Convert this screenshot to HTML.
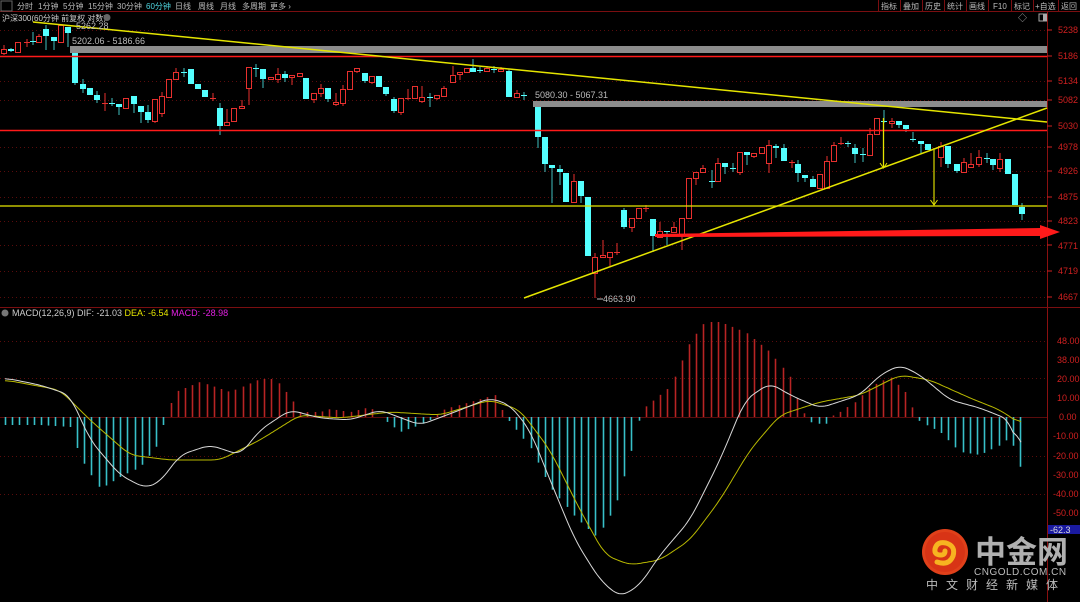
<!DOCTYPE html>
<html><head><meta charset="utf-8">
<style>
html,body{margin:0;padding:0;background:#000;width:1080px;height:602px;overflow:hidden;font-family:"Liberation Sans","Noto Sans CJK SC",sans-serif}
svg{position:absolute;left:0;top:0}
text{font-family:"Liberation Sans","Noto Sans CJK SC",sans-serif}
</style></head><body>
<svg id="s" width="1080" height="602" xmlns="http://www.w3.org/2000/svg">
<rect width="1080" height="602" fill="#000"/>
<line x1="0" y1="11.5" x2="1080" y2="11.5" stroke="#7a0e10"/>
<rect x="1" y="1" width="11" height="10" fill="none" stroke="#666"/>
<g font-size="8" fill="#bbb">
<text x="17" y="9">分时</text><text x="38" y="9">1分钟</text><text x="63" y="9">5分钟</text><text x="88" y="9">15分钟</text><text x="117" y="9">30分钟</text>
<text x="146" y="9" fill="#4fd6e0">60分钟</text><text x="175" y="9">日线</text><text x="198" y="9">周线</text><text x="220" y="9">月线</text><text x="242" y="9">多周期</text><text x="270" y="9">更多 ›</text>
<text x="881" y="9">指标</text><text x="903" y="9">叠加</text><text x="925" y="9">历史</text><text x="947" y="9">统计</text><text x="969" y="9">画线</text><text x="993" y="9">F10</text><text x="1014" y="9">标记</text><text x="1035" y="9">+自选</text><text x="1061" y="9">返回</text>
</g>
<g stroke="#7a0e10"><line x1="878.5" y1="0" x2="878.5" y2="11"/><line x1="900.5" y1="0" x2="900.5" y2="11"/><line x1="922.5" y1="0" x2="922.5" y2="11"/><line x1="944.5" y1="0" x2="944.5" y2="11"/><line x1="966.5" y1="0" x2="966.5" y2="11"/><line x1="988.5" y1="0" x2="988.5" y2="11"/><line x1="1011.5" y1="0" x2="1011.5" y2="11"/><line x1="1033.5" y1="0" x2="1033.5" y2="11"/><line x1="1058.5" y1="0" x2="1058.5" y2="11"/></g>
<text x="2" y="21" font-size="8" fill="#ccc">沪深300(60分钟 前复权 对数)</text>
<circle cx="107" cy="17.5" r="3.5" fill="#666"/>
<text x="1018" y="21" font-size="9" fill="#aaa">◇</text>
<rect x="1039" y="14" width="8" height="7" fill="none" stroke="#aaa"/><rect x="1043" y="14" width="4" height="7" fill="#aaa"/>
<line x1="1047.5" y1="12" x2="1047.5" y2="602" stroke="#8a1010"/>
<line x1="0" y1="307.5" x2="1080" y2="307.5" stroke="#7a0e10"/>
<g id="grid"></g>
<g id="hist"></g>
<g id="cand"></g>
<rect x="70" y="46" width="977" height="7" fill="#8c8c8c"/>
<rect x="533" y="101" width="514" height="6" fill="#8c8c8c"/>
<line x1="0" y1="56.5" x2="1047" y2="56.5" stroke="#ff1a1a" stroke-width="1.5"/>
<line x1="0" y1="130.5" x2="1047" y2="130.5" stroke="#ff1a1a" stroke-width="1.5"/>
<line x1="0" y1="206" x2="1047" y2="206" stroke="#e5e500" stroke-width="1.3"/>
<line x1="33" y1="22" x2="1047" y2="122" stroke="#e5e500" stroke-width="1.5"/>
<line x1="524" y1="298" x2="1047" y2="108" stroke="#e5e500" stroke-width="1.5"/>
<line x1="883.5" y1="118" x2="883.5" y2="167" stroke="#e5e500" stroke-width="1.3"/>
<path d="M880 163 L883.5 168 L887 163" fill="none" stroke="#e5e500"/>
<line x1="934" y1="148" x2="934" y2="205" stroke="#c8c800" stroke-width="1.3"/>
<path d="M930.5 200 L934 205 L937.5 200" fill="none" stroke="#e5e500"/>
<polygon points="655,234 1040,228 1040,225 1060,232 1040,239 1040,236 655,237" fill="#ff1a1a"/>
<g font-size="9" fill="#bbb">
<text x="76" y="29">5262.28</text>
<text x="72" y="44">5202.06 - 5186.66</text>
<text x="535" y="98">5080.30 - 5067.31</text>
<text x="603" y="302">4663.90</text>
</g>
<line x1="597" y1="299" x2="603" y2="299" stroke="#bbb"/>
<g font-size="9" fill="#d02020">
<text x="1058" y="33">5238</text><text x="1058" y="59">5186</text><text x="1058" y="84">5134</text><text x="1058" y="103">5082</text><text x="1058" y="129">5030</text><text x="1058" y="150">4978</text><text x="1058" y="174">4926</text><text x="1058" y="200">4875</text><text x="1058" y="224">4823</text><text x="1058" y="249">4771</text><text x="1058" y="274">4719</text><text x="1058" y="300">4667</text>
<text x="1057" y="344">48.00</text><text x="1057" y="363">38.00</text><text x="1057" y="382">20.00</text><text x="1057" y="401">10.00</text><text x="1059" y="420">0.00</text><text x="1053" y="439">-10.00</text><text x="1053" y="459">-20.00</text><text x="1053" y="478">-30.00</text><text x="1053" y="497">-40.00</text><text x="1053" y="516">-50.00</text>
</g>
<g stroke="#d02020"><line x1="1047" y1="30" x2="1052" y2="30"/><line x1="1047" y1="56" x2="1052" y2="56"/><line x1="1047" y1="81" x2="1052" y2="81"/><line x1="1047" y1="100" x2="1052" y2="100"/><line x1="1047" y1="126" x2="1052" y2="126"/><line x1="1047" y1="147" x2="1052" y2="147"/><line x1="1047" y1="171" x2="1052" y2="171"/><line x1="1047" y1="197" x2="1052" y2="197"/><line x1="1047" y1="221" x2="1052" y2="221"/><line x1="1047" y1="245" x2="1052" y2="245"/><line x1="1047" y1="271" x2="1052" y2="271"/><line x1="1047" y1="297" x2="1052" y2="297"/></g>
<rect x="1048" y="525" width="32" height="9" fill="#1a1aa0"/>
<text x="1050" y="533" font-size="9" fill="#ddd">-62.3</text>
<circle cx="5" cy="313" r="3.5" fill="#777"/>
<text x="12" y="316" font-size="9" fill="#ccc">MACD(12,26,9) DIF: -21.03 <tspan fill="#e5e500">DEA: -6.54</tspan> <tspan fill="#e020e0">MACD: -28.98</tspan></text>
<polyline id="dea" fill="none" stroke="#b8b800" stroke-width="1"/>
<polyline id="dif" fill="none" stroke="#d8d8d8" stroke-width="1"/>
<circle cx="945" cy="552" r="23" fill="#e0401a"/>
<circle cx="945" cy="552" r="20" fill="#d83416"/>
<path d="M937 562 q12 4 16 -6 q3 -10 -7 -13 q-9 -2 -11 6 q-1 6 6 6 q4 0 4 -4" fill="none" stroke="#f7b420" stroke-width="5" stroke-linecap="round"/>
<text x="975" y="563" font-size="31" font-weight="bold" fill="#b0b0b0" font-family="Noto Sans CJK SC,sans-serif">中金网</text>
<text x="974" y="575" font-size="10" fill="#bbb" letter-spacing="0.5">CNGOLD.COM.CN</text>
<text x="926" y="589" font-size="12" fill="#bbb" letter-spacing="8" font-family="Noto Sans CJK SC,sans-serif">中文财经新媒体</text>
</svg>
<script>
var NS="http://www.w3.org/2000/svg";
function el(p,t,a){var e=document.createElementNS(NS,t);for(var k in a)e.setAttribute(k,a[k]);p.appendChild(e);return e;}
var g=document.getElementById('grid');
[30,81,100,147,171,197,221,245,271,297,341,378,456,494].forEach(function(y){el(g,'line',{x1:0,y1:y+.5,x2:1047,y2:y+.5,stroke:'#5a0c0c','stroke-dasharray':'1,3'});});
el(g,'line',{x1:0,y1:417.5,x2:1047,y2:417.5,stroke:'#5a0c0c'});
var C=[[1,49,53,45,55,'r'],[8,49,51,48,52,'c'],[15,42,52,42,52,'r'],[24,42,42,39,47,'r'],[30,41,41,32,45,'c'],[36,36,42,34,42,'r'],[43,29,36,25,50,'c'],[51,37,41,37,50,'c'],[58,25,42,25,42,'r'],[65,27,33,27,47,'c'],[72,52,83,52,85,'c'],[80,84,89,79,93,'c'],[87,88,95,88,95,'c'],[94,95,100,91,103,'c'],[102,103,103,93,111,'r'],[109,103,103,98,106,'c'],[116,104,107,104,115,'c'],[123,98,108,98,108,'r'],[131,96,104,96,113,'c'],[138,106,112,106,123,'c'],[145,112,120,105,123,'c'],[152,99,121,99,123,'r'],[159,96,113,92,117,'r'],[166,79,97,79,97,'r'],[173,72,79,68,79,'r'],[181,72,72,68,77,'c'],[188,69,84,69,84,'c'],[195,84,89,84,89,'c'],[202,90,97,90,97,'c'],[210,98,98,93,101,'r'],[217,108,126,103,135,'c'],[224,122,125,109,125,'r'],[231,108,121,108,121,'r'],[239,106,108,100,108,'r'],[246,67,88,67,105,'r'],[253,68,68,64,77,'c'],[260,69,79,69,88,'c'],[268,77,79,77,79,'r'],[275,74,79,68,83,'r'],[282,74,78,71,82,'c'],[289,75,77,75,85,'r'],[297,73,76,73,76,'r'],[303,78,99,78,99,'c'],[311,93,99,93,103,'r'],[318,88,93,84,97,'r'],[325,88,99,88,102,'c'],[333,102,104,93,106,'r'],[340,89,103,85,106,'r'],[347,71,89,71,89,'r'],[354,68,71,68,73,'r'],[362,73,81,73,83,'c'],[369,76,82,76,84,'r'],[376,76,87,76,87,'c'],[383,87,94,87,96,'c'],[391,99,111,97,113,'c'],[398,98,112,98,115,'r'],[405,98,98,89,100,'r'],[412,86,98,86,98,'r'],[419,97,101,86,103,'r'],[427,97,97,93,107,'c'],[434,95,98,95,100,'r'],[441,88,96,86,96,'r'],[450,75,82,66,82,'r'],[457,72,74,72,80,'r'],[464,68,72,68,73,'r'],[470,68,72,59,72,'c'],[477,70,70,67,73,'c'],[484,68,71,66,71,'r'],[491,69,69,66,73,'c'],[498,69,71,67,71,'r'],[506,71,97,69,97,'c'],[514,93,97,90,97,'r'],[521,95,95,92,100,'c'],[535,105,137,103,148,'c'],[542,137,164,137,172,'c'],[549,165,168,165,203,'c'],[557,169,172,165,185,'c'],[563,173,202,173,202,'c'],[571,181,202,174,202,'r'],[578,181,196,181,203,'c'],[585,197,256,197,256,'c'],[592,257,273,253,298,'r'],[600,255,257,240,258,'r'],[607,252,257,252,267,'r'],[614,252,252,243,255,'r'],[621,210,227,208,229,'c'],[629,218,227,218,232,'r'],[636,208,218,208,218,'r'],[643,208,208,205,212,'r'],[650,219,236,219,252,'c'],[657,231,237,222,237,'r'],[664,231,231,231,245,'c'],[671,227,232,222,232,'r'],[679,218,235,218,250,'r'],[686,178,218,178,218,'r'],[693,172,178,172,185,'r'],[700,168,172,165,173,'r'],[709,181,181,170,188,'c'],[715,163,181,158,181,'r'],[722,163,167,163,174,'c'],[730,168,168,163,172,'c'],[737,152,172,152,175,'r'],[744,152,155,152,165,'c'],[751,153,156,153,158,'r'],[759,147,153,147,153,'r'],[766,145,163,140,173,'r'],[773,146,148,144,158,'c'],[781,148,161,144,161,'c'],[789,162,162,160,168,'r'],[795,164,173,160,182,'c'],[802,175,178,175,182,'c'],[810,179,187,176,187,'c'],[817,174,188,174,188,'r'],[824,161,188,156,188,'r'],[831,145,161,142,161,'r'],[838,143,143,137,145,'r'],[845,143,143,141,147,'c'],[852,148,154,144,163,'c'],[860,154,154,148,162,'c'],[867,134,155,128,155,'r'],[874,118,134,118,134,'r'],[881,121,121,110,123,'c'],[889,121,123,118,128,'r'],[896,121,125,121,128,'c'],[903,125,129,125,132,'c'],[910,139,139,132,142,'c'],[918,141,144,141,153,'c'],[925,144,150,144,150,'c'],[938,146,157,142,167,'r'],[945,146,164,146,168,'c'],[954,164,171,164,173,'c'],[961,162,172,158,172,'r'],[968,164,167,153,168,'r'],[976,157,164,150,167,'r'],[984,158,158,153,163,'c'],[990,159,165,159,170,'c'],[997,159,168,153,172,'r'],[1005,159,174,159,174,'c'],[1012,174,205,174,205,'c'],[1019,207,214,203,220,'c']];
var cg=document.getElementById('cand');
C.forEach(function(c){var x=c[0],w=6,col=c[5]=='r'?'#e8302e':'#54ffff',wc=c[5]=='r'?'#e8302e':'#3fbfc0';
var mx=x+w/2;
el(cg,'line',{x1:mx,y1:c[3],x2:mx,y2:c[4],stroke:wc});
var h=c[2]-c[1];
if(h<1){el(cg,'line',{x1:x,y1:c[1]+.5,x2:x+w,y2:c[1]+.5,stroke:col});}
else if(c[5]=='r'){el(cg,'rect',{x:x+.5,y:c[1]+.5,width:w-1,height:h,fill:'#000',stroke:col});}
else el(cg,'rect',{x:x,y:c[1],width:w,height:h,fill:col});});
function interp(P,x){for(var i=0;i<P.length-1;i++){if(x<=P[i+1][0]){var t=(x-P[i][0])/(P[i+1][0]-P[i][0]);return P[i][1]+t*(P[i+1][1]-P[i][1]);}}return P[P.length-1][1];}
var H=[[5,-8],[40,-8],[70,-10],[80,-40],[100,-72],[120,-60],[140,-50],[160,-25],[165,0],[175,25],[200,35],[230,25],[260,38],[275,38],[290,20],[300,5],[320,5],[330,8],[350,5],[370,10],[380,0],[400,-15],[420,-8],[430,-3],[445,8],[470,15],[495,22],[505,0],[510,-5],[530,-30],[550,-70],[575,-100],[597,-120],[615,-90],[630,-40],[638,-5],[645,10],[670,30],[690,75],[705,95],[720,95],[745,85],[770,65],[790,40],[800,10],[810,-5],[825,-8],[830,0],[840,5],[855,15],[870,30],[890,40],[905,25],[912,10],[920,-5],[940,-15],[960,-35],[980,-38],[1000,-28],[1010,-20],[1022,-55]];
var hg=document.getElementById('hist');
for(var x=5;x<=1022;x+=7.2){var v=interp(H,x),xx=Math.round(x)+.5;if(Math.abs(v)<1)continue;
el(hg,'line',{x1:xx,y1:417,x2:xx,y2:417-v,stroke:v>0?'#b82424':'#38c0c8','stroke-width':1.6});}
var DIF=[[5,378],[40,385],[70,395],[90,440],[120,475],[145,488],[160,482],[180,455],[210,445],[240,455],[260,430],[290,410],[320,418],[350,420],[380,410],[420,425],[460,410],[490,398],[510,405],[530,430],[550,480],[575,540],[600,580],[620,597],[640,585],[660,555],[690,520],[720,460],[745,400],[770,383],[790,395],[820,408],[860,395],[880,375],[900,365],[920,375],[950,400],[980,408],[1010,420],[1022,458]];
var DEA=[[5,380],[60,390],[90,420],[130,455],[170,460],[220,460],[260,440],[300,415],[340,418],[390,412],[440,415],[490,400],[520,410],[550,450],[580,510],[605,555],[630,565],[660,560],[690,540],[720,500],[750,450],[780,415],[820,402],[860,395],[900,375],[930,380],[970,398],[1000,410],[1022,425]];
function sm(P){var a=[];for(var x=5;x<=1022;x+=2)a.push(interp(P,x));var b=a.map(function(v,i){var s=0,n=0;for(var k=-4;k<=4;k++){var j=i+k;if(j>=0&&j<a.length){s+=a[j];n++;}}return s/n;});return b.map(function(v,i){return (5+2*i)+','+v.toFixed(1);}).join(' ');}
document.getElementById('dif').setAttribute('points',sm(DIF));
document.getElementById('dea').setAttribute('points',sm(DEA));
</script>
</body></html>
